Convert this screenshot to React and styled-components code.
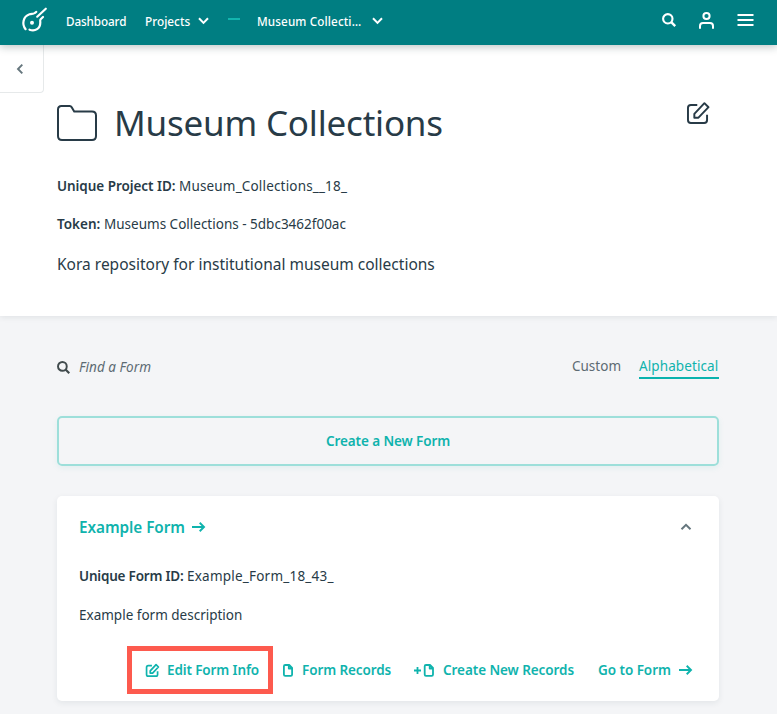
import React from 'react';
import styled, { createGlobalStyle } from 'styled-components';

const Global = createGlobalStyle`
  * { box-sizing: border-box; }
  body {
    margin: 0;
    background: #f4f5f7;
    color: #283b47;
    font-family: "Noto Sans", "Open Sans", sans-serif;
    overflow: hidden;
  }
  h1, h2, p { margin: 0; font-weight: 400; }
`;

const Page = styled.div`
  width: 777px;
  height: 714px;
  overflow: hidden;
  display: flex;
  flex-direction: column;
`;

const Text = styled.span`
  display: block;
  flex: none;
  white-space: nowrap;
  width: ${(p) => p.$w}px;
  font-size: ${(p) => p.$size || 13.5}px;
  font-weight: ${(p) => p.$weight || 400};
  letter-spacing: ${(p) => p.$ls || 0}px;
  line-height: 20px;
`;

const Icon = styled.svg`
  display: block;
  flex: none;
  fill: none;
  stroke: currentColor;
  color: ${(p) => p.$color || 'inherit'};
  overflow: visible;
`;

const TopBar = styled.header`
  flex: none;
  height: 45px;
  padding: 0 23px 5px 22px;
  display: flex;
  align-items: center;
  background: #007e82;
  color: #fff;
  position: relative;
  z-index: 2;
  box-shadow: 0 2px 8px rgba(20, 50, 50, 0.28);
`;

const Nav = styled.nav`
  display: flex;
  align-items: center;
  margin: 1px 0 0 19px;
`;

const NavItem = styled.a`
  display: flex;
  align-items: center;
  gap: ${(p) => p.$gap || 0}px;
  margin-right: ${(p) => p.$after || 0}px;
`;

const Dash = styled.span`
  width: 12px;
  height: 2px;
  margin: -4px 17px 0 0;
  background: #13b5ae;
`;

const Tools = styled.div`
  display: flex;
  align-items: center;
  margin-left: auto;
  gap: 23px;
`;

const Hero = styled.section`
  flex: none;
  height: 271px;
  background: #fff;
  box-shadow: 0 1px 6px rgba(30, 50, 60, 0.1);
`;

const BackButton = styled.button`
  width: 44px;
  height: 48px;
  display: flex;
  align-items: center;
  padding: 0 0 0 16px;
  border: solid #e6e9ea;
  border-width: 0 1px 1px 0;
  border-radius: 0 0 4px 0;
  background: #fff;
  color: #65767d;
`;

const HeroBody = styled.div`
  padding: 7px 68px 0 57px;
`;

const TitleRow = styled.div`
  height: 46px;
  display: flex;
  align-items: flex-start;
  justify-content: space-between;
`;

const Title = styled.h1`
  display: flex;
  align-items: center;
  gap: 17px;
`;

const TitleText = styled(Text)`
  line-height: 46px;
`;

const Line = styled.p`
  display: flex;
  gap: 4px;
  margin-top: ${(p) => p.$top}px;
`;

const Main = styled.main`
  padding: 41px 58px 0 57px;
`;

const FilterBar = styled.div`
  height: 23px;
  display: flex;
  align-items: flex-start;
  justify-content: space-between;
`;

const Search = styled.label`
  display: flex;
  align-items: center;
  gap: 9px;
  color: #5d6b73;
  font-style: italic;
`;

const Tabs = styled.div`
  display: flex;
  gap: 19px;
  margin-top: -1px;
  color: #5d6b73;
`;

const Tab = styled.a`
  height: 23px;
  border-bottom: 2px solid ${(p) => (p.$active ? '#0ab3ae' : 'transparent')};
  color: ${(p) => (p.$active ? '#0fb3ad' : 'inherit')};
`;

const CreateButton = styled.button`
  width: 100%;
  height: 50px;
  margin-top: 36px;
  padding: 0;
  display: flex;
  align-items: center;
  justify-content: center;
  border: 2px solid #9ddfda;
  border-radius: 5px;
  background: transparent;
  color: #0fb3ad;
  font-family: inherit;
  box-shadow: 0 2px 6px rgba(20, 160, 155, 0.08);
`;

const Card = styled.article`
  height: 205px;
  margin-top: 30px;
  padding: 21px 27px 0 22px;
  border-radius: 5px;
  background: #fff;
  box-shadow: 0 2px 6px rgba(30, 50, 60, 0.08);
`;

const CardHead = styled.div`
  display: flex;
  align-items: center;
  justify-content: space-between;
  height: 20px;
  color: #0fb3ad;
`;

const FormLink = styled.h2`
  display: flex;
  align-items: center;
  gap: 7px;
`;

const Actions = styled.div`
  display: flex;
  align-items: center;
  height: 48px;
  margin: 21px 0 0 48px;
  color: #0fb3ad;
`;

const Action = styled.a`
  display: flex;
  align-items: center;
  gap: ${(p) => p.$gap}px;
  margin-left: ${(p) => p.$left || 0}px;
`;

const Highlighted = styled(Action)`
  flex: none;
  width: 146px;
  height: 48px;
  padding-left: 14px;
  border: 5px solid #fd5a4e;
`;

const EditLink = styled.a`
  margin-top: 2px;
`;

const Down = () => (
  <Icon width="11" height="8" viewBox="0 0 11 8" strokeWidth="2">
    <path d="M1 1.3 5.5 5.9 10 1.3" />
  </Icon>
);

const Magnifier = ({ size, color }) => (
  <Icon width={size} height={size} viewBox="0 0 14 14" strokeWidth="2.1" $color={color}>
    <circle cx="5.8" cy="5.8" r="4.7" />
    <path d="m9.2 9.2 4 4" strokeWidth="2.4" />
  </Icon>
);

const Arrow = () => (
  <Icon width="13" height="10" viewBox="0 0 13 10" strokeWidth="1.9">
    <path d="M0 5h12M7.7.8 12 5 7.7 9.2" />
  </Icon>
);

const EditIcon = ({ size, stroke }) => (
  <Icon width={size} height={size} viewBox="0 0 23 23" strokeWidth={stroke} strokeLinejoin="round">
    <path d="M10.5 3H4Q1 3 1 6v12.5q0 3 3 3h13.5q3 0 3-3V13" />
    <path d="m7.5 12.2 10.3-11L22 5.3 11.7 16H7.5z" />
  </Icon>
);

const FileIcon = () => (
  <Icon width="10" height="13" viewBox="0 0 10 13" strokeWidth="1.8" strokeLinejoin="round">
    <path d="M2.3 1h3.9L9.1 4v6.6q0 1.3-1.3 1.3H2.2Q.9 11.9.9 10.6V2.3Q.9 1 2.3 1zM5.8 1v3.5h3.3" />
  </Icon>
);

export default function App() {
  return (
    <Page>
      <Global />
      <TopBar>
        <Icon width="25" height="25" viewBox="0 0 25 25" strokeWidth="2.2" strokeLinecap="round">
          <path d="M3.6 21.2C-.4 16.2 1 8.5 7.5 6.3c2.2-.7 3.8-.2 5.2-1.3l1.6-1.2" />
          <path d="m15.2 8.7 8.6-8" />
          <path d="m21 9-2.3 2.2c-.9.9-.4 2-.4 3.3 0 6-5 9.3-10.8 7.2" />
          <circle cx="10" cy="14.8" r="2" fill="currentColor" stroke="none" />
        </Icon>
        <Nav>
          <NavItem $after={19}><Text $w={60} $size={11.7} $ls={-0.1} $weight={500}>Dashboard</Text></NavItem>
          <NavItem $gap={8} $after={19}>
            <Text $w={45} $size={11.8} $weight={500}>Projects</Text>
            <Down />
          </NavItem>
          <Dash />
          <NavItem $gap={11}>
            <Text $w={104} $size={11.7} $ls={0.12} $weight={500}>Museum Collecti…</Text>
            <Down />
          </NavItem>
        </Nav>
        <Tools>
          <Magnifier size={14} />
          <Icon width="15" height="17" viewBox="0 0 15 17" strokeWidth="2" strokeLinecap="round">
            <circle cx="7.5" cy="4" r="3.1" />
            <path d="M1 16v-2.1q0-3 3-3h7q3 0 3 3V16" />
          </Icon>
          <Icon width="17" height="12" viewBox="0 0 17 12" strokeWidth="1.9">
            <path d="M.5 1h16M.5 6h16M.5 11h16" />
          </Icon>
        </Tools>
      </TopBar>
      <Hero>
        <BackButton aria-label="Back">
          <Icon $color="#65767d" width="8" height="10" viewBox="0 0 8 10" strokeWidth="1.9">
            <path d="M6.3.6 2 5l4.3 4.4" />
          </Icon>
        </BackButton>
        <HeroBody>
          <TitleRow>
            <Title>
              <Icon width="40" height="36" viewBox="0 0 40 36" strokeWidth="2" strokeLinejoin="round">
                <path d="M4.5 1h8.2q1.3 0 2 1.2l2.5 4.3H35q4 0 4 4V31q0 4-4 4H5q-4 0-4-4V4.5Q1 1 4.5 1z" />
              </Icon>
              <TitleText $w={328} $size={35} $ls={-0.2}>Museum Collections</TitleText>
            </Title>
            <EditLink aria-label="Edit project"><EditIcon size={22.5} stroke={2} /></EditLink>
          </TitleRow>
          <Line $top={30}>
            <Text $w={118} $ls={-0.05} $weight={600}>Unique Project ID:</Text>
            <Text $w={168} $ls={0.17}>Museum_Collections__18_</Text>
          </Line>
          <Line $top={18}>
            <Text $w={43} $weight={600}>Token:</Text>
            <Text $w={243}>Museums Collections - 5dbc3462f00ac</Text>
          </Line>
          <Line $top={20}>
            <Text $w={378} $size={15.5}>Kora repository for institutional museum collections</Text>
          </Line>
        </HeroBody>
      </Hero>
      <Main>
        <FilterBar>
          <Search>
            <Magnifier size={13} color="#414b4d" />
            <Text $w={73} $ls={0.05}>Find a Form</Text>
          </Search>
          <Tabs>
            <Tab><Text $w={48}>Custom</Text></Tab>
            <Tab $active><Text $w={80} $ls={0.1}>Alphabetical</Text></Tab>
          </Tabs>
        </FilterBar>
        <CreateButton><Text $w={124} $ls={-0.1} $weight={600}>Create a New Form</Text></CreateButton>
        <Card>
          <CardHead>
            <FormLink>
              <Text $w={106} $size={15.3} $weight={600} $ls={-0.05}>Example Form</Text>
              <Arrow />
            </FormLink>
            <Icon $color="#65767d" width="12" height="8" viewBox="0 0 12 8" strokeWidth="2">
              <path d="M1.5 6.2 6 1.8l4.5 4.4" />
            </Icon>
          </CardHead>
          <Line $top={29}>
            <Text $w={104} $ls={-0.2} $weight={600}>Unique Form ID:</Text>
            <Text $w={148} $ls={0.22}>Example_Form_18_43_</Text>
          </Line>
          <Line $top={19}>
            <Text $w={164}>Example form description</Text>
          </Line>
          <Actions>
            <Highlighted $gap={8}>
              <EditIcon size={13} stroke={3} />
              <Text $w={92} $ls={-0.12} $weight={600}>Edit Form Info</Text>
            </Highlighted>
            <Action $gap={9} $left={10}>
              <FileIcon />
              <Text $w={89} $ls={-0.1} $weight={600}>Form Records</Text>
            </Action>
            <Action $gap={9} $left={23}>
              <Icon width="20" height="13" viewBox="0 0 20 13" strokeWidth="1.8" strokeLinejoin="round">
                <path d="M0 6.5h7M3.5 3v7M12 1h4l3 3v6.6q0 1.3-1.3 1.3H12q-1.3 0-1.3-1.3V2.3Q10.7 1 12 1zM15.7 1v3.5H19" />
              </Icon>
              <Text $w={131} $ls={-0.07} $weight={600}>Create New Records</Text>
            </Action>
            <Action $gap={8} $left={24}>
              <Text $w={73} $ls={-0.05} $weight={600}>Go to Form</Text>
              <Arrow />
            </Action>
          </Actions>
        </Card>
      </Main>
    </Page>
  );
}
